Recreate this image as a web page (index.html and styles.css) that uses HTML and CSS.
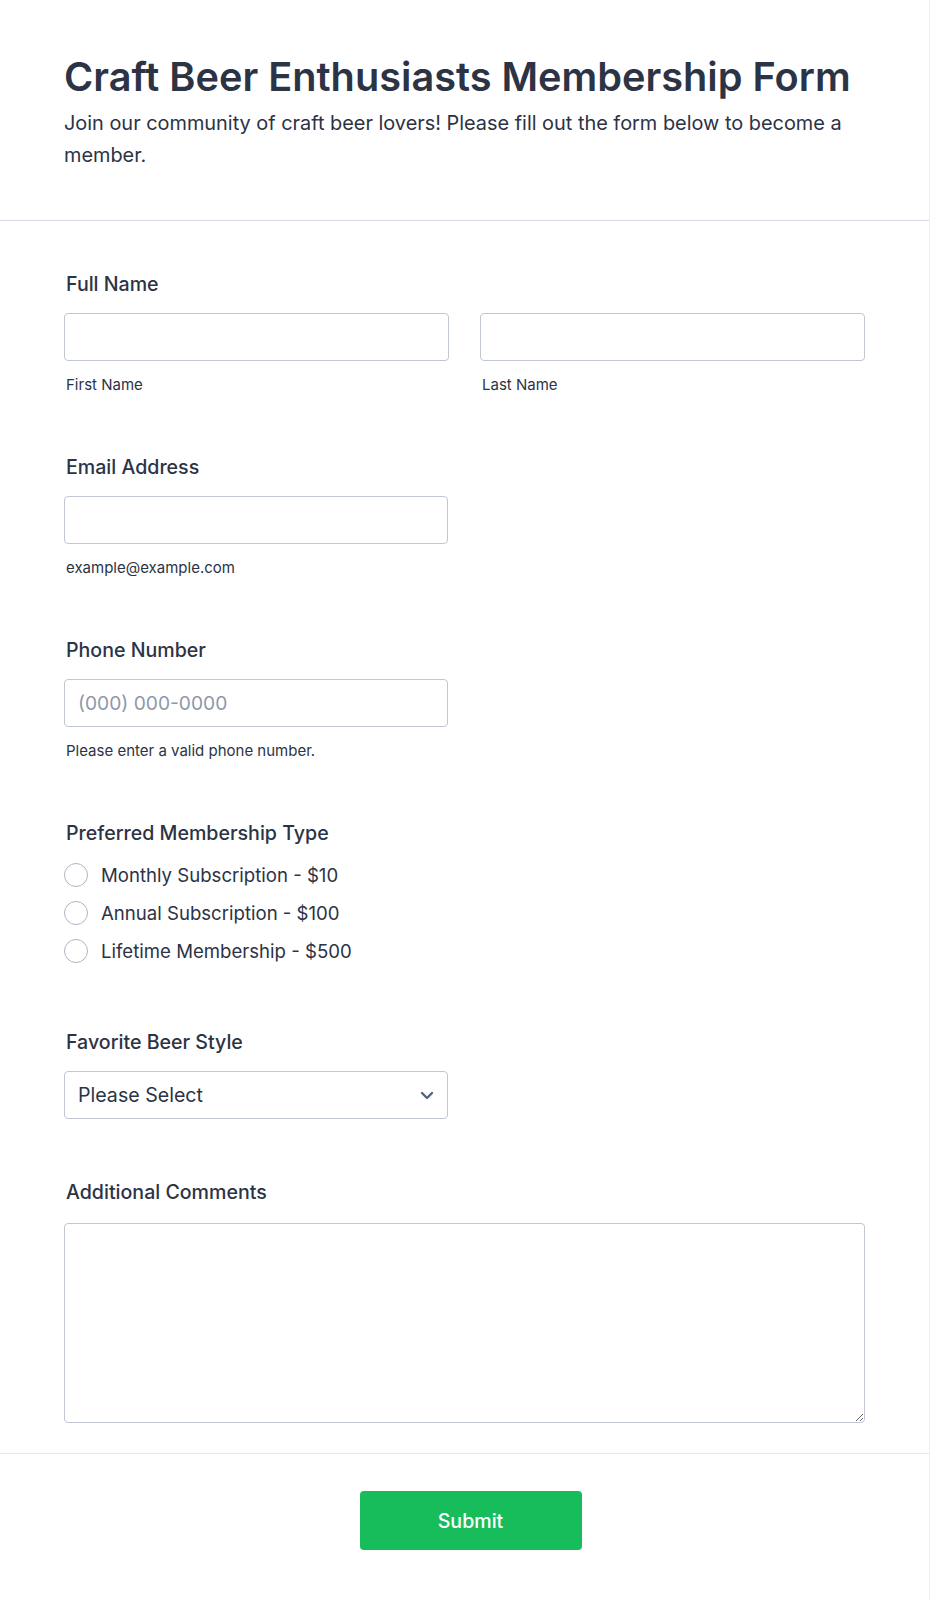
FILE: index.html
```html
<!DOCTYPE html>
<html lang="en">
<head>
<meta charset="utf-8">
<title>Craft Beer Enthusiasts Membership Form</title>
<link rel="stylesheet" href="styles.css">
</head>
<body>
<div class="page">
  <header class="header">
    <h1 class="title">Craft Beer Enthusiasts Membership Form</h1>
    <p class="subtitle">Join our community of craft beer lovers! Please fill out the form below to become a member.</p>
  </header>
  <form class="form">
    <div class="field">
      <label class="label">Full Name</label>
      <div class="name-grid">
        <div class="name-col">
          <input class="input" type="text">
          <span class="sublabel">First Name</span>
        </div>
        <div class="name-col">
          <input class="input" type="text">
          <span class="sublabel">Last Name</span>
        </div>
      </div>
    </div>

    <div class="field">
      <label class="label">Email Address</label>
      <input class="input half" type="email">
      <span class="sublabel">example@example.com</span>
    </div>

    <div class="field">
      <label class="label">Phone Number</label>
      <input class="input half phone" type="tel" placeholder="(000) 000-0000">
      <span class="sublabel">Please enter a valid phone number.</span>
    </div>

    <div class="field">
      <label class="label">Preferred Membership Type</label>
      <div class="radios">
        <label class="radio-row"><span class="radio"></span><span class="radio-text">Monthly Subscription - $10</span></label>
        <label class="radio-row"><span class="radio"></span><span class="radio-text">Annual Subscription - $100</span></label>
        <label class="radio-row"><span class="radio"></span><span class="radio-text">Lifetime Membership - $500</span></label>
      </div>
    </div>

    <div class="field field-select">
      <label class="label">Favorite Beer Style</label>
      <div class="select-wrap half">
        <select class="select">
          <option>Please Select</option>
        </select>
        <svg class="chevron" width="14" height="9" viewBox="0 0 14 9"><path d="M2 2 L7 7 L12 2" fill="none" stroke="#57647e" stroke-width="2.4" stroke-linecap="round" stroke-linejoin="round"/></svg>
      </div>
    </div>

    <div class="field last">
      <label class="label">Additional Comments</label>
      <textarea class="textarea"></textarea>
    </div>
  </form>
  <footer class="footer">
    <button class="submit" type="button">Submit</button>
  </footer>
</div>
</body>
</html>
```
FILE: styles.css
```css
* { box-sizing: border-box; }
html, body { margin: 0; padding: 0; background: #ffffff; }
body {
  font-family: Inter, "Noto Sans", "Liberation Sans", sans-serif;
  color: #2c3345;
}
.page {
  width: 930px;
  min-height: 1600px;
  border-right: 1px solid #eceef3;
}
.header {
  padding: 53px 64px 49px;
  border-bottom: 1px solid #d8dae5;
}
.title {
  margin: 0;
  font-size: 39.7px;
  line-height: 48px;
  font-weight: 600;
  color: #2c3345;
}
.subtitle {
  margin: 6px 0 0;
  font-size: 19.9px;
  line-height: 32px;
  font-weight: 400;
  color: #2c3345;
}
.form {
  padding: 51px 64px 30px;
  display: flex;
  flex-direction: column;
}
.field {
  display: flex;
  flex-direction: column;
  margin-bottom: 60px;
}
.field.field-select { margin-bottom: 61px; }
.field.last { margin-bottom: 0; }
.field.last .label { margin-bottom: 19px; }
.label {
  display: block;
  font-size: 19.6px;
  line-height: 24px;
  font-weight: 500;
  padding-left: 2px;
  margin-bottom: 17px;
  color: #2c3345;
}
.name-grid {
  display: grid;
  grid-template-columns: 1fr 1fr;
  column-gap: 31px;
}
.name-col { display: flex; flex-direction: column; }
.input {
  display: block;
  width: 100%;
  height: 48px;
  border: 1px solid #c0c6d4;
  border-radius: 4px;
  padding: 0 13px;
  font-family: inherit;
  font-size: 19.6px;
  color: #2c3345;
  background: #fff;
  outline: none;
}
.input.phone { font-size: 19.2px; }
.input::placeholder { color: #8f98ab; }
.half { width: 384px; }
.sublabel {
  display: block;
  margin-top: 14px;
  padding-left: 2px;
  font-size: 15px;
  line-height: 20px;
  color: #2c3345;
}
.radios {
  display: flex;
  flex-direction: column;
  margin-top: -6px;
}
.radio-row {
  display: flex;
  align-items: center;
  height: 38px;
  gap: 13px;
}
.radio {
  width: 24px;
  height: 24px;
  border: 1.5px solid #aeb5c3;
  border-radius: 50%;
  background: #fff;
  flex: none;
}
.radio-text {
  font-size: 18.6px;
  line-height: 24px;
  color: #2c3345;
}
.select-wrap {
  position: relative;
  height: 48px;
}
.select {
  appearance: none;
  -webkit-appearance: none;
  width: 100%;
  height: 48px;
  border: 1px solid #c0c6d4;
  border-radius: 4px;
  padding: 0 13px;
  font-family: inherit;
  font-size: 19.6px;
  color: #2c3345;
  background: #fff;
  outline: none;
}
.chevron {
  position: absolute;
  right: 14px;
  top: 20px;
  pointer-events: none;
}
.textarea {
  display: block;
  width: 100%;
  height: 200px;
  border: 1px solid #c0c6d4;
  border-radius: 4px;
  font-family: inherit;
  font-size: 16px;
  resize: vertical;
  outline: none;
}
.footer {
  border-top: 1px solid #e3e7ee;
  padding: 37px 0 50px 12px;
  display: flex;
  justify-content: center;
}
.submit {
  width: 222px;
  height: 59px;
  border: none;
  border-radius: 4px;
  background: #18bd5b;
  color: #ffffff;
  font-family: inherit;
  font-size: 19.6px;
  font-weight: 500;
  cursor: pointer;
}
```
